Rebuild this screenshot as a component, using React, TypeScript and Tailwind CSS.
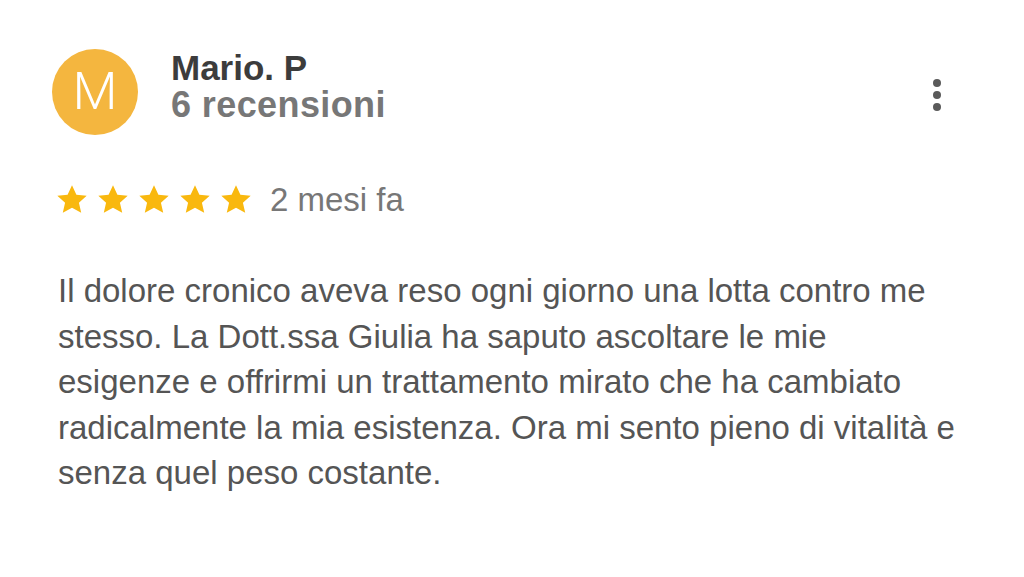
import React from "react";

const Star = () => (
  <svg width="32" height="31" viewBox="0 0 24 23" className="block">
    <path
      d="M12 0.8l3.3 7.1 7.7 0.8-5.8 5.2 1.7 7.6L12 17.6l-6.9 3.9 1.7-7.6L1 8.7l7.7-0.8z"
      fill="#F9B80E"
    />
  </svg>
);

export default function App() {
  return (
    <div
      className="w-[1024px] h-[577px] bg-white overflow-hidden"
      style={{ fontFamily: "'Liberation Sans', Arial, sans-serif" }}
    >
      <div className="pl-[52px] pr-[40px] pt-[49px]">
        <div className="flex items-start">
          <div className="w-[86px] h-[86px] rounded-full bg-[#F4B63F] flex items-center justify-center shrink-0">
            <span className="text-white text-[52px] font-light leading-none" style={{ fontFamily: "Roboto, sans-serif" }}>M</span>
          </div>
          <div className="ml-[33px] flex flex-col">
            <div className="text-[35px] font-bold text-[#3c3c3c] leading-[37px]">Mario. P</div>
            <div className="text-[36px] font-bold text-[#777777] leading-[37px] tracking-[0.4px]">6 recensioni</div>
          </div>
          <div className="ml-auto mt-[30px] mr-[43px] flex flex-col gap-[4px]">
            <span className="w-[8px] h-[8px] rounded-full bg-[#5a5a5a]" />
            <span className="w-[8px] h-[8px] rounded-full bg-[#5a5a5a]" />
            <span className="w-[8px] h-[8px] rounded-full bg-[#5a5a5a]" />
          </div>
        </div>
        <div className="flex items-center mt-[48px] pl-[4px]">
          <div className="flex gap-[9px]">
            <Star />
            <Star />
            <Star />
            <Star />
            <Star />
          </div>
          <span className="ml-[18px] text-[33px] text-[#777777] leading-none">2 mesi fa</span>
        </div>
        <p className="mt-[52px] pl-[6px] text-[33px] text-[#555555] leading-[45.5px] whitespace-nowrap">
          Il dolore cronico aveva reso ogni giorno una lotta contro me
          <br />
          stesso. La Dott.ssa Giulia ha saputo ascoltare le mie
          <br />
          esigenze e offrirmi un trattamento mirato che ha cambiato
          <br />
          radicalmente la mia esistenza. Ora mi sento pieno di vitalità e
          <br />
          senza quel peso costante.
        </p>
      </div>
    </div>
  );
}
